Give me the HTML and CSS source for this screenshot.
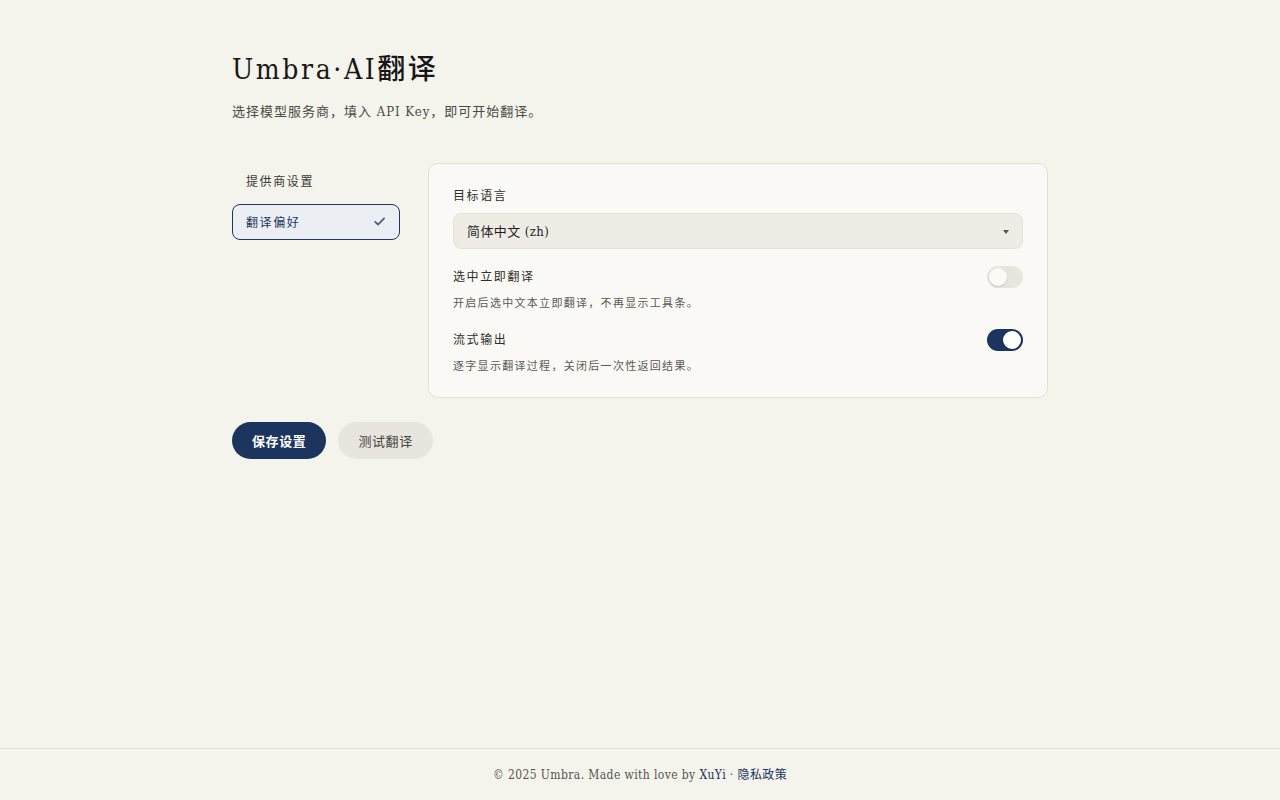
FILE: index.html
```html
<!DOCTYPE html>
<html lang="zh-CN">
<head>
    <meta charset="UTF-8">
    <meta name="viewport" content="width=device-width, initial-scale=1.0">
    <title>Umbra·AI翻译 - 设置</title>
    <link rel="stylesheet" href="styles.css">
</head>
<body>
    <main class="page">
        <header class="intro">
            <h1>Umbra·AI翻译</h1>
            <p class="lead">选择模型服务商，填入 API Key，即可开始翻译。</p>
        </header>

        <div class="layout">
            <nav class="side-nav">
                <a class="nav-item" href="#">提供商设置</a>
                <a class="nav-item active" href="#">
                    <span>翻译偏好</span>
                    <svg class="check" width="13" height="13" viewBox="0 0 12 12" fill="none">
                        <path d="M2 6.3l2.7 2.5L10.2 3.2" stroke="currentColor" stroke-width="1.7" stroke-linecap="round" stroke-linejoin="round"/>
                    </svg>
                </a>
            </nav>

            <section class="card">
                <div class="field">
                    <label class="field-label" for="targetLang">目标语言</label>
                    <div class="select-wrap">
                        <select id="targetLang" class="select">
                            <option>简体中文 (zh)</option>
                        </select>
                        <span class="caret"></span>
                    </div>
                </div>

                <div class="toggle-row">
                    <div class="toggle-head">
                        <span class="field-label">选中立即翻译</span>
                        <span class="switch"></span>
                    </div>
                    <p class="hint">开启后选中文本立即翻译，不再显示工具条。</p>
                </div>

                <div class="toggle-row">
                    <div class="toggle-head">
                        <span class="field-label">流式输出</span>
                        <span class="switch on"></span>
                    </div>
                    <p class="hint">逐字显示翻译过程，关闭后一次性返回结果。</p>
                </div>
            </section>
        </div>

        <div class="actions">
            <button class="btn primary">保存设置</button>
            <button class="btn secondary">测试翻译</button>
        </div>
    </main>

    <footer class="site-footer">
        © 2025 Umbra. Made with love by <a href="#">XuYi</a> · <a href="#">隐私政策</a>
    </footer>
</body>
</html>
```

FILE: styles.css
```css
html, body {
    height: 100%;
}
body {
    margin: 0;
    background-color: #f4f3ec;
    color: #1f1f1f;
    font-family: "DejaVu Serif Condensed", "DejaVu Serif", "Noto Sans CJK SC", serif;
    font-stretch: condensed;
    display: flex;
    flex-direction: column;
}
.page {
    flex: 1;
    width: 816px;
    margin: 0 auto;
    padding-top: 52px;
}
h1 {
    margin: 0;
    font-size: 28px;
    font-weight: 500;
    letter-spacing: 2.6px;
    line-height: 36px;
    color: #171717;
}
.lead {
    margin: 13px 0 0;
    font-size: 13px;
    letter-spacing: 1px;
    color: #4a4a45;
    line-height: 22px;
}
.layout {
    display: flex;
    align-items: flex-start;
    gap: 28px;
    margin-top: 40px;
}
.side-nav {
    width: 168px;
    display: flex;
    flex-direction: column;
    gap: 5px;
}
.nav-item {
    display: flex;
    align-items: center;
    justify-content: space-between;
    height: 36px;
    padding: 0 13px 1px;
    box-sizing: border-box;
    border: 1px solid transparent;
    border-radius: 8px;
    font-size: 12px;
    letter-spacing: 1.6px;
    color: #3a3a36;
    text-decoration: none;
}
.nav-item.active {
    border-color: #1b355e;
    background-color: #ebeef3;
    color: #1b355e;
}
.check {
    color: #4f6281;
}
.card {
    flex: 1;
    background-color: #faf9f5;
    border: 1px solid #e3e0d8;
    border-radius: 10px;
    padding: 22px 24px 21px;
}
.field-label {
    display: block;
    font-size: 12px;
    letter-spacing: 1.6px;
    color: #2e2e2a;
    line-height: 20px;
}
.field > .field-label {
    padding-top: 1px;
    line-height: 19px;
}
.select-wrap {
    position: relative;
    margin-top: 7px;
}
.select {
    appearance: none;
    width: 100%;
    height: 36px;
    padding: 0 13px;
    background-color: #efece5;
    border: 1px solid #e6e2da;
    border-radius: 8px;
    font-family: inherit;
    font-stretch: condensed;
    font-size: 13px;
    letter-spacing: 0.4px;
    color: #1f1f1f;
}
.caret {
    position: absolute;
    right: 14px;
    top: 17px;
    border-left: 3.5px solid transparent;
    border-right: 3.5px solid transparent;
    border-top: 4px solid #555;
}
.toggle-row {
    margin-top: 17px;
}
.toggle-row + .toggle-row {
    margin-top: 16px;
}
.toggle-head {
    display: flex;
    align-items: center;
    justify-content: space-between;
}
.switch {
    position: relative;
    width: 36px;
    height: 22px;
    border-radius: 11px;
    background-color: #e8e5de;
    box-sizing: border-box;
}
.switch::after {
    content: "";
    position: absolute;
    left: 2px;
    top: 2px;
    width: 18px;
    height: 18px;
    border-radius: 50%;
    background-color: #fbfaf7;
    box-shadow: 0 1px 2px rgba(0, 0, 0, 0.15);
}
.switch.on {
    background-color: #1b355e;
}
.switch.on::after {
    left: auto;
    right: 2px;
    background-color: #fff;
}
.hint {
    margin: 7px 0 0;
    font-size: 11px;
    letter-spacing: 1.3px;
    color: #5a5a55;
    line-height: 18px;
}
.actions {
    display: flex;
    gap: 12px;
    margin-top: 24px;
}
.btn {
    height: 37px;
    padding: 0 20px;
    border: none;
    border-radius: 19px;
    font-family: inherit;
    font-size: 13px;
    letter-spacing: 0.6px;
    cursor: pointer;
}
.btn.primary {
    background-color: #1b355e;
    color: #fff;
    font-weight: 700;
}
.btn.secondary {
    background-color: #e8e5de;
    color: #45443f;
}
.site-footer {
    border-top: 1px solid #e2e0d8;
    padding: 19px 0 17px;
    text-align: center;
    font-size: 12px;
    letter-spacing: 0.4px;
    color: #55554f;
    line-height: 15px;
}
.site-footer a {
    color: #1b355e;
    text-decoration: none;
}
```
